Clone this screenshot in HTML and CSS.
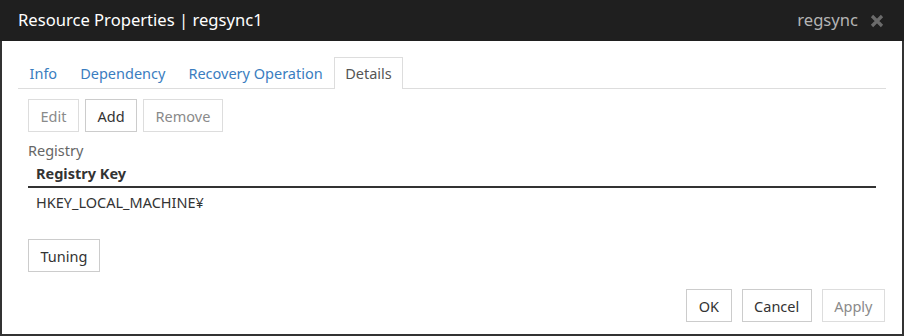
FILE: index.html
```html
<!DOCTYPE html>
<html>
<head>
<meta charset="UTF-8">
<title>Resource Properties</title>
<link rel="stylesheet" href="styles.css">
</head>
<body>
<div class="dialog">
  <div class="titlebar">
    <span class="title">Resource Properties | regsync1</span>
    <span class="type">regsync</span>
    <svg class="close" width="14" height="14" viewBox="0 0 14 14"><path d="M2 2 L12 12 M12 2 L2 12" stroke="#6b6b6b" stroke-width="3.2"/></svg>
  </div>
  <div class="content">
    <ul class="tabs">
      <li><span>Info</span></li>
      <li><span>Dependency</span></li>
      <li><span>Recovery Operation</span></li>
      <li class="active"><span>Details</span></li>
    </ul>
    <div class="pane">
      <div class="toolbar">
        <button class="btn" disabled>Edit</button>
        <button class="btn">Add</button>
        <button class="btn" disabled>Remove</button>
      </div>
      <div class="label">Registry</div>
      <table class="grid">
        <thead><tr><th>Registry Key</th></tr></thead>
        <tbody><tr><td>HKEY_LOCAL_MACHINE¥</td></tr></tbody>
      </table>
      <div class="tuning"><button class="btn">Tuning</button></div>
    </div>
    <div class="footer">
      <button class="btn">OK</button>
      <button class="btn">Cancel</button>
      <button class="btn" disabled>Apply</button>
    </div>
  </div>
</div>
</body>
</html>
```
FILE: styles.css
```css
html, body { margin:0; padding:0; background:#fff; }
body { font-family:"Noto Sans", "Open Sans", sans-serif; font-size:14.5px; color:#333; }

.dialog { width:904px; height:336px; box-sizing:border-box; border:2px solid #333; border-top:none; display:flex; flex-direction:column; }

.titlebar { height:41px; margin:0 -2px; background:#1f1f1f; display:flex; align-items:center; padding:0 20px 0 18px; color:#fff; }
.titlebar .title { font-size:16.6px; flex:1; padding-bottom:2px; }
.titlebar .type { font-size:16.6px; color:#b4b4b4; margin-right:12px; padding-bottom:2px; }
.titlebar .close { display:block; }

.content { flex:1; display:flex; flex-direction:column; padding:16px 16px 12px 16px; }

.tabs { list-style:none; margin:0; padding:0; display:flex; border-bottom:1px solid #ddd; height:31px; }
.tabs li { padding:0 10.5px; line-height:30px; color:#3a7dc0; border:1px solid transparent; border-bottom:none; margin-bottom:-1px; }
.tabs li.active { color:#555; background:#fff; border-color:#ddd; height:31px; padding:0 10px; }

.pane { padding:10px 10px 0 10px; }

.btn { font-family:inherit; font-size:14.5px; color:#333; background:#fff; border:1px solid #ccc; height:33px; padding:0 11.5px; margin:0; cursor:pointer; }
.btn:disabled { color:#8a8a8a; border-color:#ddd; }

.toolbar { display:flex; gap:6px; }

.label { color:#666; line-height:20px; margin-top:8px; }

.grid { width:100%; border-collapse:collapse; }
.grid th { text-align:left; font-weight:bold; padding:3px 8px 3px 8px; line-height:20px; border-bottom:2px solid #333; }
.grid td { padding:4px 8px 5px 8px; line-height:20px; }

.tuning { margin-top:22px; }

.footer { margin-top:auto; display:flex; justify-content:flex-end; gap:10px; padding-right:1px; }
```
